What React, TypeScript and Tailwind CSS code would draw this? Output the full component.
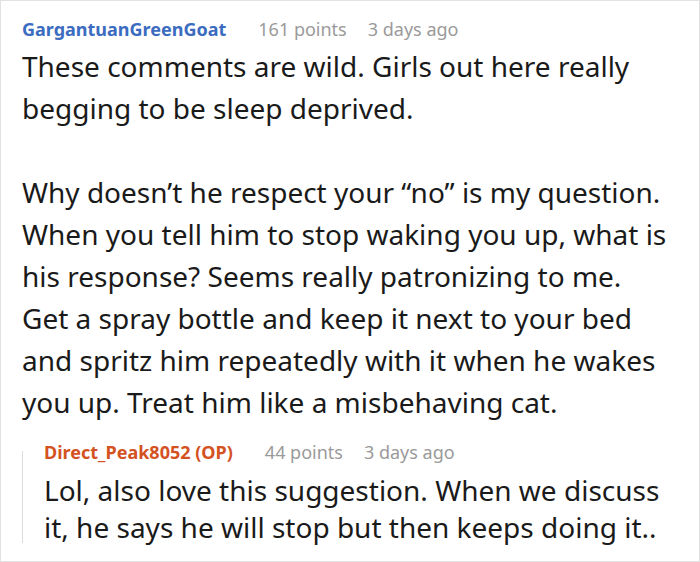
const mainLines1 = [
  'These comments are wild. Girls out here really',
  'begging to be sleep deprived.',
];

const mainLines2 = [
  'Why doesn\u2019t he respect your \u201cno\u201d is my question.',
  'When you tell him to stop waking you up, what is',
  'his response? Seems really patronizing to me.',
  'Get a spray bottle and keep it next to your bed',
  'and spritz him repeatedly with it when he wakes',
  'you up. Treat him like a misbehaving cat.',
];

const replyLines = [
  'Lol, also love this suggestion. When we discuss',
  'it, he says he will stop but then keeps doing it..',
];

function Meta({ name, points, age, color }: { name: string; points: string; age: string; color: string }) {
  return (
    <div className="flex items-baseline text-[18px] leading-[24px] whitespace-nowrap">
      <span className={`font-bold ${color}`}>{name}</span>
      <span className="ml-[32px] text-[#9a9a9a]">{points}</span>
      <span className="ml-[21px] text-[#9a9a9a]">{age}</span>
    </div>
  );
}

function Lines({ lines, leading }: { lines: string[]; leading: string }) {
  return (
    <p className={`text-[28px] text-[#1a1a1a] ${leading}`}>
      {lines.map((line) => (
        <span key={line} className="block whitespace-nowrap">
          {line}
        </span>
      ))}
    </p>
  );
}

export default function App() {
  return (
    <div
      className="w-[700px] h-[562px] overflow-hidden border border-[#e2e2e2] bg-white pl-[21px] pt-[16px]"
      style={{ fontFamily: '"Noto Sans", "Open Sans", sans-serif' }}
    >
      <Meta name="GargantuanGreenGoat" points="161 points" age="3 days ago" color="text-[#3b6cc0]" />
      <div className="mt-[4px]">
        <Lines lines={mainLines1} leading="leading-[42px]" />
      </div>
      <div className="mt-[42px]">
        <Lines lines={mainLines2} leading="leading-[42px]" />
      </div>

      <div className="mt-[17px] flex">
        <div className="mt-[11px] mb-[3px] w-px bg-[#dcdcdc]" />
        <div className="pl-[21px]">
          <Meta name="Direct_Peak8052 (OP)" points="44 points" age="3 days ago" color="text-[#d4521f]" />
          <div className="mt-[8px]">
            <Lines lines={replyLines} leading="leading-[37px]" />
          </div>
        </div>
      </div>
    </div>
  );
}
